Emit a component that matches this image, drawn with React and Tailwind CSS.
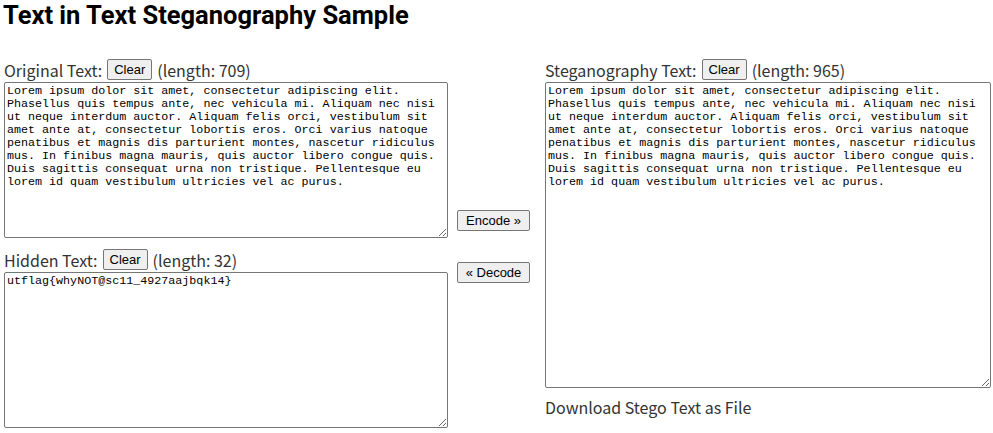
import React, { useState } from "react";

const SAMPLE =
  "Lorem ipsum dolor sit amet, consectetur adipiscing elit.\nPhasellus quis tempus ante, nec vehicula mi. Aliquam nec nisi\nut neque interdum auctor. Aliquam felis orci, vestibulum sit\namet ante at, consectetur lobortis eros. Orci varius natoque\npenatibus et magnis dis parturient montes, nascetur ridiculus\nmus. In finibus magna mauris, quis auctor libero congue quis.\nDuis sagittis consequat urna non tristique. Pellentesque eu\nlorem id quam vestibulum ultricies vel ac purus.";

// ── Small native-looking button ───────────────────────────────────────────────
const Btn = ({ children, onClick, className = "" }) => (
  <button
    type="button"
    onClick={onClick}
    className={`h-[21px] px-[6px] bg-[#efefef] border border-[#767676] rounded-[2px] text-[13px] leading-none text-black font-['Liberation_Sans',Arial,sans-serif] ${className}`}
  >
    {children}
  </button>
);

const Area = ({ value, onChange, className = "" }) => (
  <textarea
    value={value}
    onChange={(e) => onChange(e.target.value)}
    spellCheck={false}
    className={`block w-full border border-[#767676] rounded-[2px] px-[2px] py-[2px] text-[11.7px] leading-[13px] text-black font-['Liberation_Mono',monospace] resize-y outline-none ${className}`}
  />
);

const FieldLabel = ({ label, onClear, length }) => (
  <div className="flex items-center gap-[5px] h-[24px] pb-[1px] text-[16px] text-[#333]">
    <span>{label}</span>
    <Btn onClick={onClear}>Clear</Btn>
    <span>(length: {length})</span>
  </div>
);

export default function App() {
  const [original, setOriginal] = useState(SAMPLE);
  const [hidden, setHidden] = useState("utflag{whyNOT@sc11_4927aajbqk14}");
  const [stego, setStego] = useState(SAMPLE);

  return (
    <div className="w-[993px] h-[433px] bg-white overflow-hidden font-['Noto_Sans_CJK_JP','Noto_Sans',sans-serif]">
      <h2 className="h-[30px] pl-[3px] text-[25.5px] leading-[30px] font-bold text-black font-['Roboto','Noto_Sans',sans-serif]">
        Text in Text Steganography Sample
      </h2>

      <div className="flex pt-[28px] pl-[4px]">
        {/* left column */}
        <div className="w-[444px]">
          <FieldLabel label="Original Text:" onClear={() => setOriginal("")} length={709} />
          <Area value={original} onChange={setOriginal} className="h-[156px]" />

          <div className="mt-[10px]">
            <FieldLabel label="Hidden Text:" onClear={() => setHidden("")} length={32} />
          </div>
          <Area value={hidden} onChange={setHidden} className="h-[156px]" />
        </div>

        {/* middle buttons */}
        <div className="w-[97px] pl-[9px] pt-[152px] flex flex-col items-start gap-[31px]">
          <Btn className="w-[73px]">Encode »</Btn>
          <Btn className="w-[73px]">« Decode</Btn>
        </div>

        {/* right column */}
        <div className="w-[446px]">
          <FieldLabel label="Steganography Text:" onClear={() => setStego("")} length={965} />
          <Area value={stego} onChange={setStego} className="h-[306px]" />
          <div className="mt-[8px] text-[16px] leading-[22px] text-[#333]">Download Stego Text as File</div>
        </div>
      </div>
    </div>
  );
}
